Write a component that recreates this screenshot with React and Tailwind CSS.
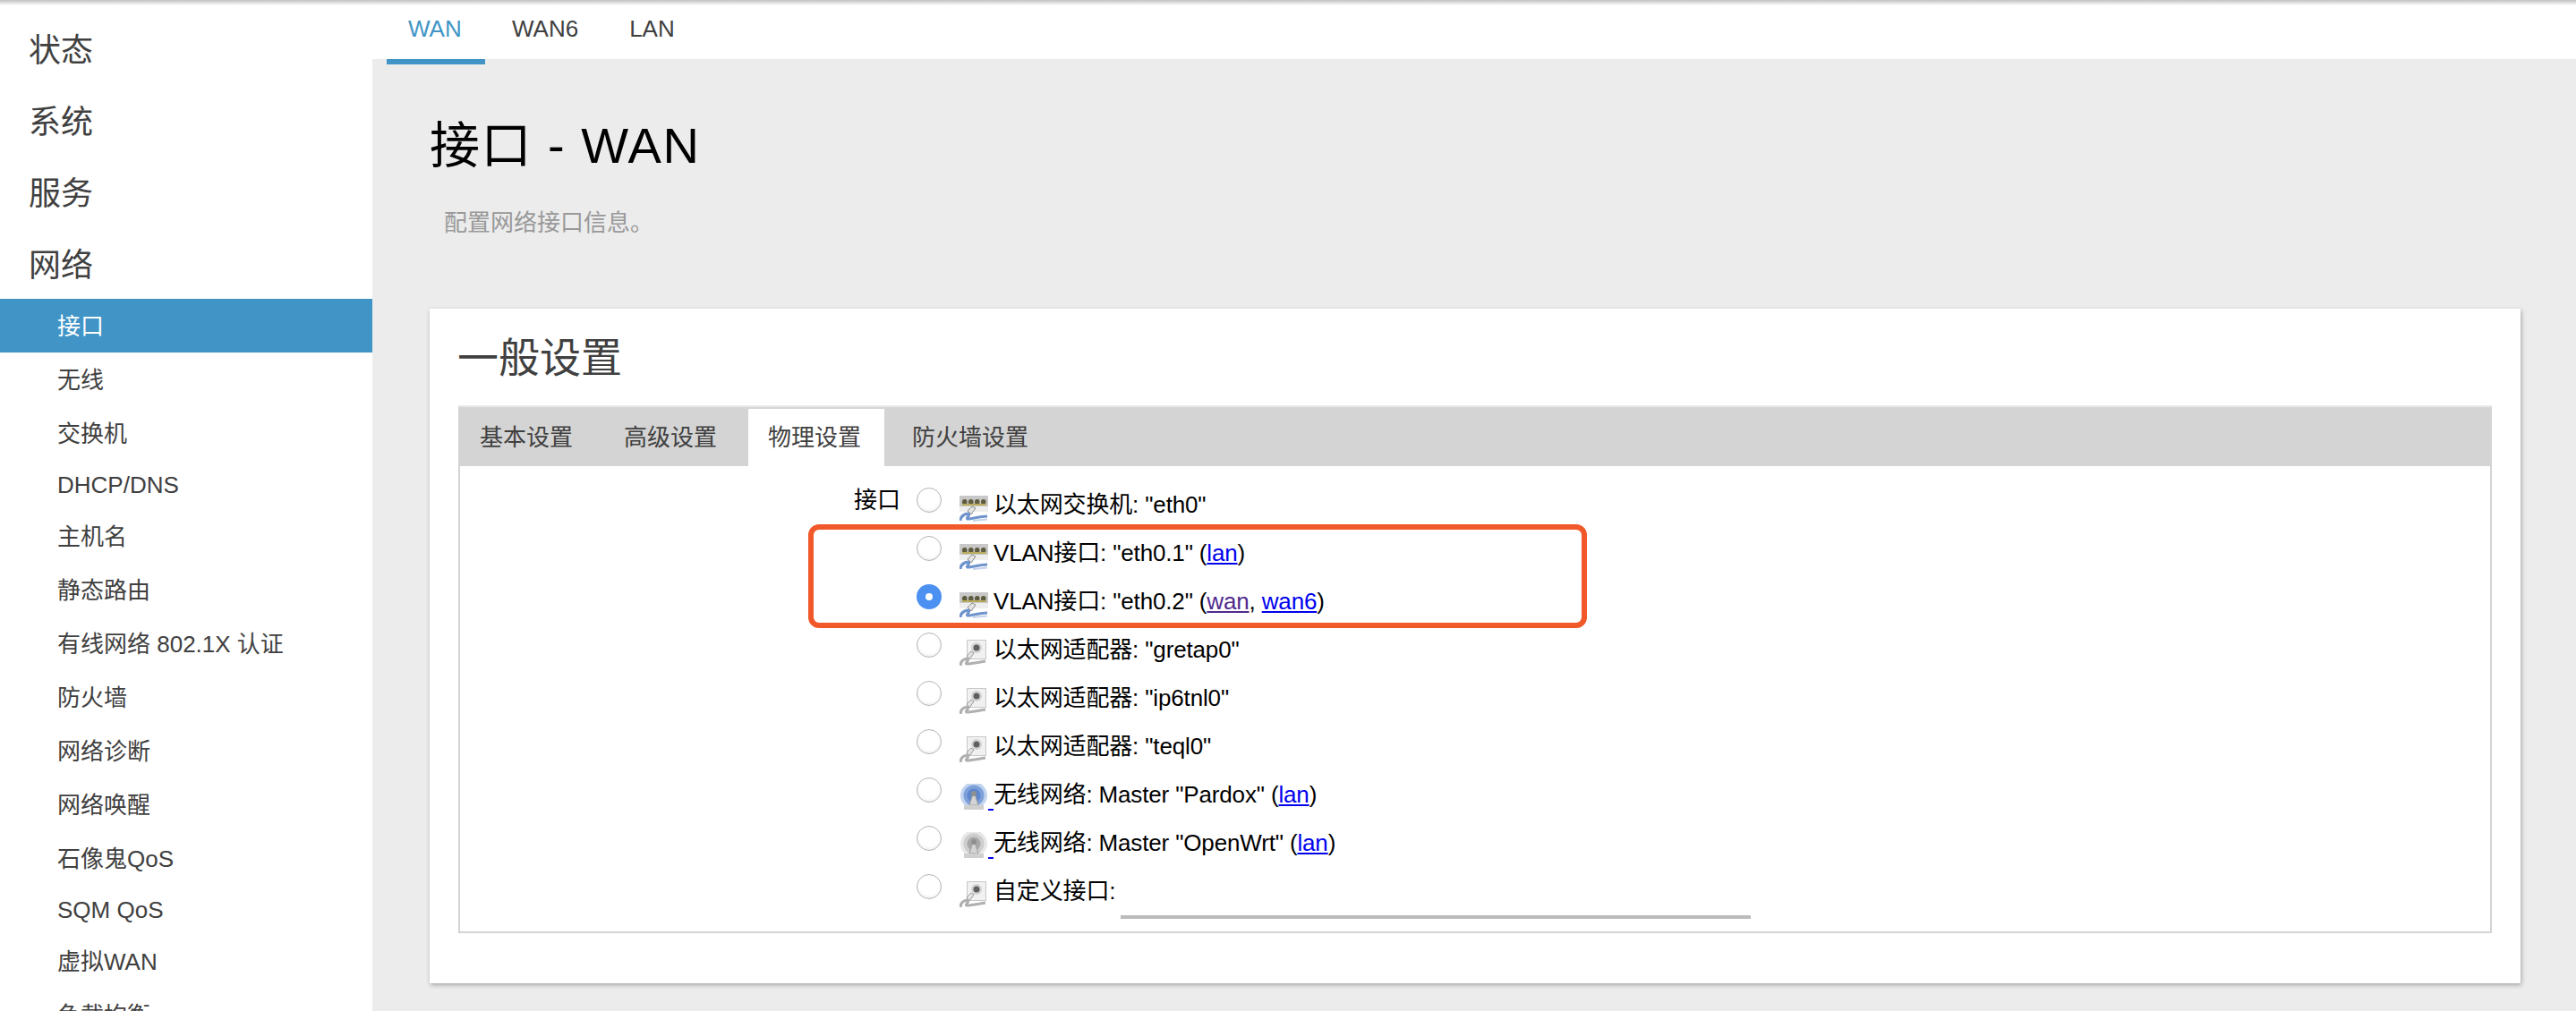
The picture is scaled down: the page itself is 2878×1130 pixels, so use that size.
const sans = "font-['Liberation_Sans','Noto_Sans_CJK_SC',sans-serif]";

const topMenu = ['状态', '系统', '服务', '网络'];
const subMenu = [
  { label: '接口', active: true },
  { label: '无线' },
  { label: '交换机' },
  { label: 'DHCP/DNS', latin: true },
  { label: '主机名' },
  { label: '静态路由' },
  { label: '有线网络 802.1X 认证' },
  { label: '防火墙' },
  { label: '网络诊断' },
  { label: '网络唤醒' },
  { label: '石像鬼QoS' },
  { label: 'SQM QoS', latin: true },
  { label: '虚拟WAN' },
  { label: '负载均衡' },
];

function SwitchIcon() {
  return (
    <svg width="32" height="30" viewBox="0 0 32 30" className="shrink-0 mt-[8px]">
      <rect x="0" y="1" width="32" height="18" fill="#c8c8c8" />
      <rect x="0" y="13" width="32" height="6" fill="#eeeeee" />
      <g fill="#5f5b3e">
        <rect x="3" y="5" width="5.5" height="6" rx="2.5" />
        <rect x="10" y="5" width="5.5" height="6" rx="2.5" />
        <rect x="17" y="5" width="5.5" height="6" rx="2.5" />
        <rect x="24" y="5" width="5.5" height="6" rx="2.5" />
      </g>
      <rect x="3" y="10" width="26.5" height="2" fill="#b9ab5c" />
      <path d="M9 18 L14 13 L18 15 L13 22 Z" fill="#e4e4e4" stroke="#8c8c8c" strokeWidth="1" />
      <path d="M1 29 C1 24 6 21 10 21 C12 24 7 26 9 27 C15 27 22 24 31 24" fill="none" stroke="#6f93cc" strokeWidth="3.2" />
      <path d="M15 29 L31 27.5" stroke="#c4d2ea" strokeWidth="2" />
    </svg>
  );
}

function AdapterIcon() {
  return (
    <svg width="32" height="30" viewBox="0 0 32 30" className="shrink-0 mt-[8px]">
      <rect x="8.5" y="0.5" width="21" height="21" fill="#f1f1f1" stroke="#c8c8c8" />
      <circle cx="19" cy="9" r="6" fill="#8a8a8a" opacity="0.3" />
      <circle cx="19" cy="9" r="3.5" fill="#5f5f5f" />
      <path d="M8 18 L13 13 L16 15 L11 22 Z" fill="#e4e4e4" stroke="#9a9a9a" strokeWidth="1" />
      <path d="M1 29 C1 24 5 21 9 21 C11 24 6 26 8 27 C14 27 22 25 29 24" fill="none" stroke="#b0b0b0" strokeWidth="3.2" />
    </svg>
  );
}

function WifiIcon({ on }) {
  return (
    <svg width="32" height="30" viewBox="0 0 32 30" className="shrink-0 mt-[6px]">
      <circle cx="16" cy="13" r="15" fill={on ? '#c3d4ef' : '#e8e8e8'} />
      <circle cx="16" cy="13" r="11.5" fill={on ? '#7fa1da' : '#cdcdcd'} />
      <circle cx="16" cy="13" r="7.5" fill={on ? '#5d86cb' : '#a8a8a8'} />
      <path d="M16 8 L21 24 H11 Z" fill="#d4d4d4" stroke="#9c9c9c" strokeWidth="1" />
      <circle cx="16" cy="11" r="3" fill="#8f8f8f" />
      <rect x="5" y="24" width="22" height="5" fill="#cfcfcf" />
    </svg>
  );
}

function Radio({ checked }) {
  if (checked) {
    return (
      <span className="shrink-0 mb-[10px] w-[28px] h-[28px] rounded-full bg-[#4c91f2] flex items-center justify-center">
        <span className="w-[8px] h-[8px] rounded-full bg-white" />
      </span>
    );
  }
  return <span className="shrink-0 mb-[10px] w-[28px] h-[28px] rounded-full border-[1.5px] border-[#b4b4b4] bg-white shadow-[inset_0_-2px_3px_rgba(0,0,0,0.06)]" />;
}

function Lnk({ children, visited }) {
  return <a className={visited ? 'text-[#4f2a8c] underline' : 'text-[#0000ee] underline'}>{children}</a>;
}

function Row({ icon, checked, link, children }) {
  return (
    <div className="h-[54px] flex items-center">
      <Radio checked={checked} />
      <span className="w-[20px] shrink-0" />
      {icon}
      {link ? <span className="self-end mb-[9px] w-[6px] h-[2px] bg-[#0000ee] shrink-0" /> : <span className="w-[6px] shrink-0" />}
      <span className="whitespace-pre text-black tracking-[-0.15px]">{children}</span>
    </div>
  );
}

export default function App() {
  return (
    <div className={`${sans} relative h-[1130px] w-full overflow-hidden flex bg-white text-[26px] text-[#404040] leading-[32px]`}>
      <div className="absolute inset-x-0 top-0 h-[6px] z-10 bg-gradient-to-b from-[#c0c0c0] to-transparent" />

      <aside className="w-[416px] shrink-0 pt-[14px] bg-white">
        {topMenu.map((m) => (
          <div key={m} className="h-[80px] pl-[32px] pt-[6px] flex items-center text-[36px]">{m}</div>
        ))}
        {subMenu.map((m) => (
          <div
            key={m.label}
            className={`pl-[64px] flex items-center ${m.latin ? 'h-[55px]' : 'h-[60px] pt-[2px]'} ${m.active ? 'bg-[#4095c6] text-white' : ''}`}
          >
            {m.label}
          </div>
        ))}
      </aside>

      <main className="flex-1 min-w-0 bg-[#ececec]">
        <nav className="h-[66px] bg-white flex pl-[16px]">
          <a className="h-[72px] w-[110px] pl-[24px] pt-[16px] border-b-[6px] border-[#4095c6] text-[#4095c6]">WAN</a>
          <a className="ml-[30px] pt-[16px]">WAN6</a>
          <a className="ml-[57px] pt-[16px]">LAN</a>
        </nav>

        <div className="pl-[64px] pr-[62px]">
          <h1 className="mt-[65px] text-[56px] leading-[64px] text-black tracking-[1.5px]">接口 - WAN</h1>
          <p className="mt-[38px] ml-[16px] leading-[32px] text-[#999999]">配置网络接口信息。</p>

          <section className="mt-[80px] h-[754px] bg-white px-[32px] pt-[30px] shadow-[1px_2px_5px_rgba(0,0,0,0.3)]">
            <h2 className="-ml-[1px] text-[46px] leading-[50px] text-[#404040]">一般设置</h2>
            <div className="mt-[28px] border-t-2 border-[#e8e8e8]">
              <div className="h-[66px] bg-[#d4d4d4] flex items-end gap-[9px] pl-[2px]">
                <a className="h-[64px] pl-[22px] pr-[26px] flex items-center">基本设置</a>
                <a className="h-[64px] pl-[22px] pr-[26px] flex items-center">高级设置</a>
                <a className="h-[64px] pl-[22px] pr-[26px] flex items-center bg-white">物理设置</a>
                <a className="h-[64px] pl-[22px] pr-[26px] flex items-center">防火墙设置</a>
              </div>
              <div className="relative h-[522px] border-x-2 border-b-2 border-[#d4d4d4] pt-[16px] flex">
                <div className="w-[492px] shrink-0 h-[54px] flex items-center justify-end text-black pb-[10px]">接口</div>
                <div className="ml-[18px] flex-1">
                  <Row icon={<SwitchIcon />}>{'以太网交换机: "eth0"'}</Row>
                  <Row icon={<SwitchIcon />}>{'VLAN接口: "eth0.1" ('}<Lnk>lan</Lnk>)</Row>
                  <Row icon={<SwitchIcon />} checked>{'VLAN接口: "eth0.2" ('}<Lnk visited>wan</Lnk>, <Lnk>wan6</Lnk>)</Row>
                  <Row icon={<AdapterIcon />}>{'以太网适配器: "gretap0"'}</Row>
                  <Row icon={<AdapterIcon />}>{'以太网适配器: "ip6tnl0"'}</Row>
                  <Row icon={<AdapterIcon />}>{'以太网适配器: "teql0"'}</Row>
                  <Row icon={<WifiIcon on />} link>{'无线网络: Master "Pardox" ('}<Lnk>lan</Lnk>)</Row>
                  <Row icon={<WifiIcon />} link>{'无线网络: Master "OpenWrt" ('}<Lnk>lan</Lnk>)</Row>
                  <div className="relative">
                    <Row icon={<AdapterIcon />}>自定义接口:</Row>
                    <span className="absolute left-[228px] top-[54px] w-[704px] h-[4px] bg-[#bbbbbb]" />
                  </div>
                </div>
                {/* annotation drawn over the rows */}
                <div className="absolute left-[389px] top-[65px] w-[870px] h-[116px] border-[6px] border-[#f1592a] rounded-[12px] pointer-events-none" />
              </div>
            </div>
          </section>
        </div>
      </main>
    </div>
  );
}
